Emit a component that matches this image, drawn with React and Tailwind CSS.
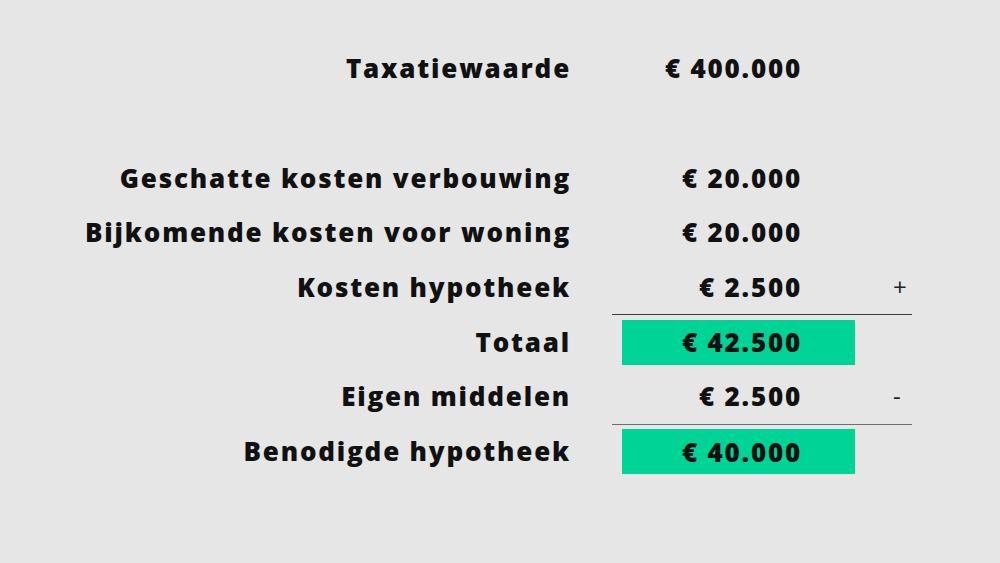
export default function App() {
  const rows = [
    { label: 'Taxatiewaarde', value: '€ 400.000' },
    { label: '', value: '' },
    { label: 'Geschatte kosten verbouwing', value: '€ 20.000' },
    { label: 'Bijkomende kosten voor woning', value: '€ 20.000' },
    { label: 'Kosten hypotheek', value: '€ 2.500', sign: '+' },
    { label: 'Totaal', value: '€ 42.500', total: true, line: 'border-[#3c3c3c]' },
    { label: 'Eigen middelen', value: '€ 2.500', sign: '-' },
    { label: 'Benodigde hypotheek', value: '€ 40.000', total: true, line: 'border-[#6e6e6e]' },
  ];

  return (
    <div className="w-[1000px] h-[563px] bg-[#e6e6e6] pt-[41px] font-['Open_Sans',sans-serif] text-[#111] overflow-hidden">
      {rows.map((row, i) => (
        <div key={i} className="flex h-[54.7px] items-center">
          <div className="w-[571px] text-right text-[26px] font-extrabold tracking-[1.8px] leading-none">
            {row.label}
          </div>
          <div className={`w-[300px] h-full ml-[41px] flex items-center ${row.line ? 'border-t-[1.5px] ' + row.line : ''}`}>
            <div className={`ml-[10px] w-[233px] h-[45px] flex items-center justify-end pr-[53px] text-[26px] font-extrabold tracking-[1.8px] leading-none ${row.total ? 'bg-[#00d396]' : ''}`}>
              {row.value}
            </div>
            {row.sign && (
              <span className="ml-[38px] text-[24px] font-normal leading-none text-[#222]">{row.sign}</span>
            )}
          </div>
        </div>
      ))}
    </div>
  );
}
